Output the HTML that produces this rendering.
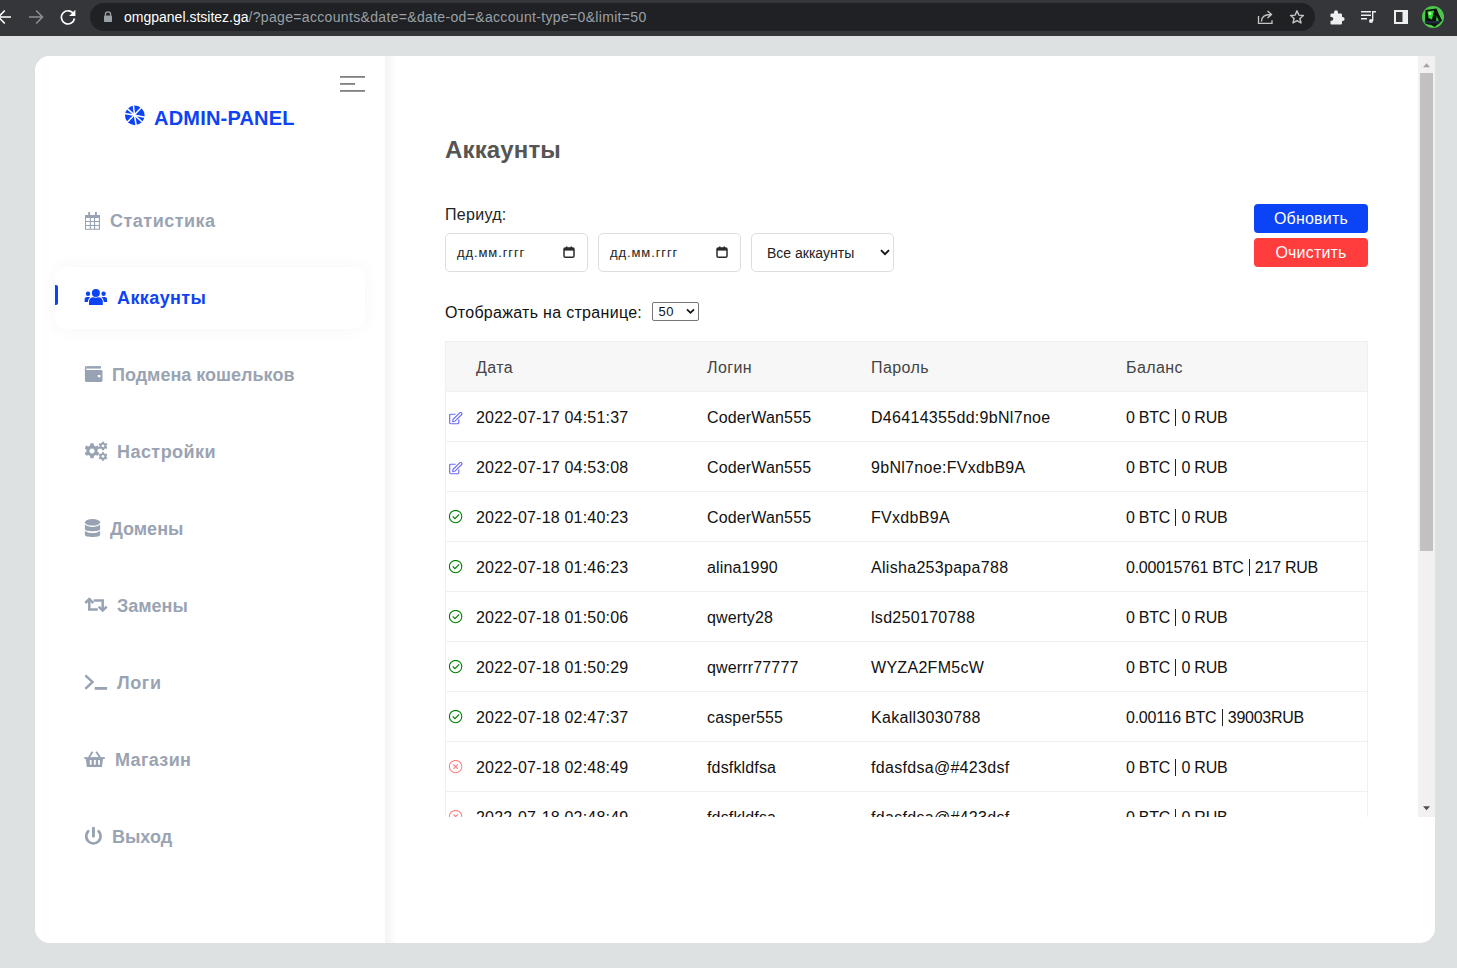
<!DOCTYPE html>
<html><head><meta charset="utf-8">
<style>
*{margin:0;padding:0;box-sizing:border-box}
html,body{width:1457px;height:968px;overflow:hidden;background:#dee1e2;font-family:"Liberation Sans",sans-serif}
#chrome{position:absolute;left:0;top:0;width:1457px;height:36px;background:#35363a}
#omni{position:absolute;left:90px;top:3px;width:1225px;height:28px;border-radius:14px;background:#202124}
#url{position:absolute;left:124px;top:9px;font-size:14px;color:#fff;white-space:nowrap;letter-spacing:0}
#url span{color:#9aa0a6;letter-spacing:.33px}
#card{position:absolute;left:35px;top:56px;width:1400px;height:887px;background:#fff;border-radius:15px;overflow:hidden}
#side{position:absolute;left:0;top:0;width:350px;height:887px;background:#fff}
#shadow{position:absolute;left:350px;top:0;width:12px;height:887px;background:linear-gradient(to right,#f3f4f6,#fff)}
.nav{position:absolute;left:49px;height:20px;font-size:18px;font-weight:bold;color:#9aa3b2;white-space:nowrap}
.nav svg{position:absolute;left:0;top:0}
.nav span{position:absolute;top:0;line-height:20px}
#active{position:absolute;left:20px;top:211px;width:310px;height:62px;border-radius:10px;background:#fff;box-shadow:0 0 16px rgba(80,100,140,.06)}
#bar{position:absolute;left:0;top:18px;width:3px;height:20px;background:#0d42f5;border-radius:0 2px 2px 0}

#main{position:absolute;left:385px;top:56px;width:1033px;height:761px;overflow:hidden}
#h1{position:absolute;left:60px;top:80px;font-size:24px;font-weight:bold;color:#555;line-height:28px;letter-spacing:.15px}
#period{position:absolute;left:60px;top:150px;font-size:16px;color:#212529;line-height:18px;letter-spacing:.3px}
.inp{position:absolute;top:177px;width:143px;height:39px;border:1px solid #dedede;border-radius:5px;background:#fff}
.inp span{position:absolute;left:11px;top:11px;font-size:13px;color:#222;line-height:16px;letter-spacing:.9px}
.inp span.sel{left:15px;letter-spacing:0;font-size:14px}
.cal{position:absolute;left:117px;top:12px}
.chev{position:absolute;left:128px;top:15px}
.btn{position:absolute;left:869px;width:114px;height:29px;border-radius:4px;color:#fff;font-size:16px;line-height:29px;text-align:center;letter-spacing:.2px}
#perpage{position:absolute;left:60px;top:248px;font-size:16px;color:#111;line-height:18px;letter-spacing:.3px}
#lim{position:absolute;left:267px;top:246px;width:47px;height:19px;border:1px solid #767676;border-radius:2px;background:#fff}
#lim span{position:absolute;left:5.5px;top:1px;letter-spacing:.4px;font-size:13px;line-height:15px;color:#111}
#lim svg{position:absolute;left:33px;top:5px}
#table{position:absolute;left:60px;top:285px;width:923px;height:560px;border-left:1px solid #eef0f6;border-right:1px solid #eef0f6}
.th,.tr{position:absolute;left:0;width:921px;height:50px;border-top:1px solid #eef0f6;font-size:16px;line-height:49px;white-space:nowrap}
.th{top:0;background:#f7f7f8;color:#444}
.tr{color:#111;background:#fff}
.th span,.tr span{position:absolute;top:1px}
.th span{letter-spacing:.4px}
.tr span.ic{top:0}
.c1{left:30px;letter-spacing:.2px}.c2{left:261px;letter-spacing:.15px}.c3{left:425px;letter-spacing:.3px}.c4{left:680px;letter-spacing:-.25px}
.ic{left:3px}
.ic svg{position:absolute;top:20px;left:0}
.pipe{display:inline-block;width:1px;height:17px;background:#222;vertical-align:-3px;margin:0 1px}
#logo{position:absolute;left:154px;top:106px;font-size:20px;font-weight:bold;color:#0d43f5;line-height:24px;letter-spacing:0.2px}
#sb{position:absolute;left:1418px;top:56px;width:17px;height:761px;background:#f1f1f1}
#thumb{position:absolute;left:2px;top:17px;width:13px;height:478px;background:#c1c1c1}
#up{position:absolute;left:5px;top:6.5px}
#dn{position:absolute;left:5px;top:750px}
</style></head><body>
<div id="chrome">
  <div id="omni"></div>
  <svg style="position:absolute;left:0;top:0" width="1457" height="35" viewBox="0 0 1457 35">
  <g fill="none" stroke="#fff" stroke-width="1.6">
    <path d="M-1 17h12M4.8 10.5l-6.3 6.5 6.3 6.5"/>
  </g>
  <g fill="none" stroke="#8e8e90" stroke-width="1.6">
    <path d="M29 17h13.5M36.2 10.5l6.3 6.5-6.3 6.5"/>
  </g>
  <g>
    <path d="M73.8 14.2a6.6 6.6 0 1 0 .7 4.3" fill="none" stroke="#fff" stroke-width="1.7"/>
    <path d="M75.4 9.8v6.3h-6.3z" fill="#fff"/>
  </g>
  <g fill="#9aa0a6">
    <rect x="104" y="15.5" width="8" height="6.5" rx="0.8"/>
    <path d="M105.4 15.7v-1.3a2.6 2.6 0 0 1 5.2 0v1.3" fill="none" stroke="#9aa0a6" stroke-width="1.3"/>
  </g>
  <!-- share -->
  <g fill="none" stroke="#c4c7c5" stroke-width="1.3">
    <path d="M1258.5 16v7.3h13.5v-3"/>
    <path d="M1261.5 21.5c0-5 3.5-7 9-7M1267.5 11l4 3.5-4 3.5"/>
  </g>
  <!-- star -->
  <path d="M1297 10.8l1.8 4.3 4.6.4-3.5 3 1.1 4.5-4-2.4-4 2.4 1.1-4.5-3.5-3 4.6-.4z" fill="none" stroke="#c4c7c5" stroke-width="1.4" stroke-linejoin="round"/>
  <!-- puzzle -->
  <path d="M1331 13.5h3v-1.2a2 2 0 0 1 4 0v1.2h3a1 1 0 0 1 1 1v2.5h.6a2 2 0 0 1 0 4h-.6v2.5a1 1 0 0 1-1 1h-9.5a1 1 0 0 1-1-1v-2.8h.9a1.9 1.9 0 0 0 0-3.8h-.9v-2.4a1 1 0 0 1 1-1z" fill="#eceef0"/>
  <!-- media -->
  <g fill="#eceef0">
    <rect x="1361" y="11" width="10" height="1.5"/><rect x="1361" y="14.5" width="10" height="1.5"/><rect x="1361" y="18" width="6" height="1.5"/>
    <circle cx="1371" cy="21" r="2"/><rect x="1372" y="11" width="1.4" height="10"/><rect x="1372" y="11" width="4" height="1.5"/>
  </g>
  <!-- side panel -->
  <path fill-rule="evenodd" d="M1394 10h14v14h-14z M1396 12h6.5v10h-6.5z" fill="#eceef0"/>
  <!-- avatar -->
  <circle cx="1433" cy="17" r="11" fill="#4cc94a"/>
  <path d="M1425.5 10l11-1.5 2.5 6 3 6-3 3-4.5 3.5-3-2-5.5-1-1-4z" fill="#0c120c"/>
  <path d="M1427.5 11.5l6.5-1-2 9-3.5-1.5z" fill="#2fdc35"/>
  <circle cx="1430" cy="13.5" r="1.4" fill="#b8f59a"/>
  <path d="M1436.5 16l2.5 4.5-3 1z" fill="#2fbf35"/>
  <path d="M1424.5 21h16l-1 2.5h-14.5z" fill="#252a48" opacity=".85"/>
</svg>

  <div id="url">omgpanel.stsitez.ga<span>/?page=accounts&amp;date=&amp;date-od=&amp;account-type=0&amp;limit=50</span></div>
</div>
<div id="card">
  <div id="side">
    <div id="active"><div id="bar"></div></div>
    <div class="nav" style="top:155px;color:#9aa3b2"><span style="left:26px;letter-spacing:0.5px">Статистика</span></div>
    <div class="nav" style="top:232px;color:#0d42f5"><span style="left:33px;letter-spacing:0.4px">Аккаунты</span></div>
    <div class="nav" style="top:309px"><span style="left:28px">Подмена кошельков</span></div>
    <div class="nav" style="top:386px"><span style="left:33px;letter-spacing:0.45px">Настройки</span></div>
    <div class="nav" style="top:463px"><span style="left:26px">Домены</span></div>
    <div class="nav" style="top:540px"><span style="left:33px">Замены</span></div>
    <div class="nav" style="top:617px"><span style="left:33px;letter-spacing:0.6px">Логи</span></div>
    <div class="nav" style="top:694px"><span style="left:31px;letter-spacing:0.35px">Магазин</span></div>
    <div class="nav" style="top:771px"><span style="left:28px">Выход</span></div>
  </div>
  <div id="shadow"></div>
</div>
<svg id="icons" style="position:absolute;left:0;top:0" width="400" height="968" viewBox="0 0 400 968">
  <g fill="#97a3b2">
    <!-- calendar -->
    <path fill-rule="evenodd" d="M85 215h15v14.8h-15z M86 217.9h3.8v3h-3.8z M90.9 217.9h3.1v3h-3.1z M95.1 217.9h3.8v3h-3.8z M86 222h3.8v2.9h-3.8z M90.9 222h3.1v2.9h-3.1z M95.1 222h3.8v2.9h-3.8z M86 226h3.8v2.8h-3.8z M90.9 226h3.1v2.8h-3.1z M95.1 226h3.8v2.8h-3.8z"/>
    <rect x="88.2" y="212" width="1.9" height="3.5"/><rect x="95" y="212" width="1.9" height="3.5"/>
    <!-- wallet -->
    <path d="M86.3 366.1h14.7v2.5h-14.7z"/>
    <path fill-rule="evenodd" d="M84.9 367.4a1.4 1.4 0 0 1 1.4-1.3v4h14.8a1.4 1.4 0 0 1 1.4 1.4v9a1.4 1.4 0 0 1-1.4 1.4h-14.8a1.4 1.4 0 0 1-1.4-1.4z M97.8 374.9h2.6v2.3h-2.6z"/>
    <!-- gears -->
    <g transform="translate(92,451)">
      <path fill-rule="evenodd" d="M-1.5-7.8h3l.5 2.3 1.6.9 2.2-.8 1.5 2.6-1.8 1.6v1.8l1.8 1.6-1.5 2.6-2.2-.8-1.6.9-.5 2.3h-3l-.5-2.3-1.6-.9-2.2.8-1.5-2.6 1.8-1.6v-1.8l-1.8-1.6 1.5-2.6 2.2.8 1.6-.9z M0-2.6a2.6 2.6 0 1 0 .01 0z"/>
    </g>
    <g transform="translate(103,445.8)">
      <path fill-rule="evenodd" d="M-1-4h2l.3 1.2.9.5 1.2-.4.9 1.5-.9.9v1l.9.9-.9 1.5-1.2-.4-.9.5-.3 1.2h-2l-.3-1.2-.9-.5-1.2.4-.9-1.5.9-.9v-1l-.9-.9.9-1.5 1.2.4.9-.5z M0-1.4a1.4 1.4 0 1 0 .01 0z"/>
    </g>
    <g transform="translate(103,456.3)">
      <path fill-rule="evenodd" d="M-1-4h2l.3 1.2.9.5 1.2-.4.9 1.5-.9.9v1l.9.9-.9 1.5-1.2-.4-.9.5-.3 1.2h-2l-.3-1.2-.9-.5-1.2.4-.9-1.5.9-.9v-1l-.9-.9.9-1.5 1.2.4.9-.5z M0-1.4a1.4 1.4 0 1 0 .01 0z"/>
    </g>
    <!-- database -->
    <ellipse cx="92.5" cy="522.3" rx="7.6" ry="3.3"/>
    <path d="M84.9 524.6c1.5 1.6 4.4 2.3 7.6 2.3s6.1-.7 7.6-2.3v4.5c0 1.6-3.4 2.2-7.6 2.2s-7.6-.6-7.6-2.2z"/>
    <path d="M84.9 530.8c1.5 1.6 4.4 2.3 7.6 2.3s6.1-.7 7.6-2.3v3.9c0 1.6-3.4 2.2-7.6 2.2s-7.6-.6-7.6-2.2z"/>
    <!-- basket -->
    <path d="M84.3 757.1h20.5v1.9h-20.5z"/>
    <path fill-rule="evenodd" d="M85.8 759h17.2l-1.1 7.9h-15z M89.8 759.9h1.8v4.9h-1.8z M93.9 759.9h1.9v4.9h-1.9z M98.1 759.9h1.8v4.9h-1.8z"/>
  </g>
  <g fill="none" stroke="#97a3b2">
    <!-- retweet -->
    <path d="M89.3 600v9.5h8.5" stroke-width="2.5"/>
    <path d="M85.3 603l4-4 4 4" stroke-width="2.5" stroke-linejoin="miter"/>
    <path d="M93.7 600.5h9v9.5" stroke-width="2.5"/>
    <path d="M98.7 606.6l4 4 4-4" stroke-width="2.5"/>
    <!-- terminal -->
    <path d="M85.3 675.3l7.3 6.7-7.3 6.8" stroke-width="2.4"/>
    <path d="M94.7 688.4h12.4" stroke-width="2.8"/>
    <!-- basket handles -->
    <path d="M92.5 751.8l-3.5 5.6M96.2 751.8l3.8 5.6" stroke-width="1.9"/>
    <!-- power -->
    <path d="M88.2 831.3a7.2 7.2 0 1 0 10.4 0" stroke-width="2.7" stroke-linecap="round"/>
    <path d="M93.45 828.2v8" stroke-width="2.9" stroke-linecap="round"/>
  </g>
  <!-- users (active) -->
  <g fill="#0d43f5">
    <circle cx="95.9" cy="293.1" r="4"/>
    <circle cx="88" cy="293.7" r="2.2"/><circle cx="103.6" cy="293.7" r="2.2"/>
    <path d="M89 305v-3.5a4.3 4.3 0 0 1 4.3-4.3c.8 0 1.6.5 2.6.5s1.8-.5 2.6-.5a4.3 4.3 0 0 1 4.3 4.3v3.5z"/>
    <path d="M84.6 301.9v-2.6a2.4 2.4 0 0 1 2.4-2.4h3.2c-1.3 1.2-2.1 3-2.3 5z"/>
    <path d="M107.1 301.9v-2.6a2.4 2.4 0 0 0-2.4-2.4h-3.2c1.3 1.2 2.1 3 2.3 5z"/>
  </g>
  <!-- logo -->
  <g>
    <circle cx="134.8" cy="115.4" r="9.8" fill="#0d43f5"/>
    <g stroke="#fff" stroke-width="1.5" fill="none">
      <path d="M133.4 105.3Q134.2 115.3 136.2 125.5"/>
      <path d="M124.6 113.6Q134.9 115.2 145 117.2"/>
      <path d="M127 108.4L143 122.8"/>
      <path d="M141.2 107.8L127.2 122.2"/>
    </g>
  </g>
  <!-- hamburger -->
  <g fill="#808080">
    <rect x="340" y="76" width="25" height="1.8"/>
    <rect x="340" y="83" width="15" height="1.8"/>
    <rect x="340" y="90" width="25" height="1.8"/>
  </g>
</svg>
<div id="logo">ADMIN-PANEL</div>

<div id="main">
  <div id="h1">Аккаунты</div>
  <div id="period">Периуд:</div>
  <div class="inp" style="left:60px"><span>дд.мм.гггг</span><svg class="cal" width="12" height="12" viewBox="0 0 12 12"><rect x="1" y="2" width="10" height="9.2" rx="1.3" fill="none" stroke="#2b2b2b" stroke-width="1.5"/><rect x="1" y="2" width="10" height="2.6" fill="#2b2b2b"/><rect x="3" y="0.5" width="1.5" height="2" fill="#2b2b2b"/><rect x="7.5" y="0.5" width="1.5" height="2" fill="#2b2b2b"/></svg></div>
  <div class="inp" style="left:213px"><span>дд.мм.гггг</span><svg class="cal" width="12" height="12" viewBox="0 0 12 12"><rect x="1" y="2" width="10" height="9.2" rx="1.3" fill="none" stroke="#2b2b2b" stroke-width="1.5"/><rect x="1" y="2" width="10" height="2.6" fill="#2b2b2b"/><rect x="3" y="0.5" width="1.5" height="2" fill="#2b2b2b"/><rect x="7.5" y="0.5" width="1.5" height="2" fill="#2b2b2b"/></svg></div>
  <div class="inp" style="left:366px"><span class="sel">Все аккаунты</span><svg class="chev" width="10" height="7" viewBox="0 0 10 7"><path d="M1 1.2l4 4 4-4" fill="none" stroke="#111" stroke-width="1.8"/></svg></div>
  <div class="btn" style="top:148px;background:#0b44f6">Обновить</div>
  <div class="btn" style="top:182px;background:#ff3d3d">Очистить</div>
  <div id="perpage">Отображать на странице:</div>
  <div id="lim"><span>50</span><svg width="10" height="7" viewBox="0 0 10 7"><path d="M1 1.4l3.5 3.5 3.5-3.5" fill="none" stroke="#111" stroke-width="1.7"/></svg></div>
  <div id="table">
    <div class="th"><span class="c1">Дата</span><span class="c2">Логин</span><span class="c3">Пароль</span><span class="c4">Баланс</span></div>
<div class="tr" style="top:50px"><span class="ic"><svg width="14" height="14" viewBox="0 0 14 14"><path d="M6.6 2.2H1.6a.9.9 0 0 0-.9.9v7.7a.9.9 0 0 0 .9.9h7.3a.9.9 0 0 0 .9-.9V7.6" fill="none" stroke="#6a6cf8" stroke-width="1.15"/><path d="M3.9 7.5L10.9 0.7A1.3 1.3 0 0 1 12.7 2.5L5.7 9.3L3.7 9.7Z" fill="none" stroke="#6a6cf8" stroke-width="1.1" stroke-linejoin="round"/></svg></span><span class="c1">2022-07-17 04:51:37</span><span class="c2">CoderWan555</span><span class="c3">D46414355dd:9bNl7noe</span><span class="c4">0 BTC <i class="pipe"></i> 0 RUB</span></div>
<div class="tr" style="top:100px"><span class="ic"><svg width="14" height="14" viewBox="0 0 14 14"><path d="M6.6 2.2H1.6a.9.9 0 0 0-.9.9v7.7a.9.9 0 0 0 .9.9h7.3a.9.9 0 0 0 .9-.9V7.6" fill="none" stroke="#6a6cf8" stroke-width="1.15"/><path d="M3.9 7.5L10.9 0.7A1.3 1.3 0 0 1 12.7 2.5L5.7 9.3L3.7 9.7Z" fill="none" stroke="#6a6cf8" stroke-width="1.1" stroke-linejoin="round"/></svg></span><span class="c1">2022-07-17 04:53:08</span><span class="c2">CoderWan555</span><span class="c3">9bNl7noe:FVxdbB9A</span><span class="c4">0 BTC <i class="pipe"></i> 0 RUB</span></div>
<div class="tr" style="top:150px"><span class="ic"><svg style="top:18px" width="14" height="14" viewBox="0 0 14 14"><circle cx="6.6" cy="6.6" r="6.2" fill="none" stroke="#008000" stroke-width="1.1"/><path d="M3.7 6.4L5.9 8.6L10.2 4.4" fill="none" stroke="#008000" stroke-width="1.25"/></svg></span><span class="c1">2022-07-18 01:40:23</span><span class="c2">CoderWan555</span><span class="c3">FVxdbB9A</span><span class="c4">0 BTC <i class="pipe"></i> 0 RUB</span></div>
<div class="tr" style="top:200px"><span class="ic"><svg style="top:18px" width="14" height="14" viewBox="0 0 14 14"><circle cx="6.6" cy="6.6" r="6.2" fill="none" stroke="#008000" stroke-width="1.1"/><path d="M3.7 6.4L5.9 8.6L10.2 4.4" fill="none" stroke="#008000" stroke-width="1.25"/></svg></span><span class="c1">2022-07-18 01:46:23</span><span class="c2">alina1990</span><span class="c3">Alisha253papa788</span><span class="c4">0.00015761 BTC <i class="pipe"></i> 217 RUB</span></div>
<div class="tr" style="top:250px"><span class="ic"><svg style="top:18px" width="14" height="14" viewBox="0 0 14 14"><circle cx="6.6" cy="6.6" r="6.2" fill="none" stroke="#008000" stroke-width="1.1"/><path d="M3.7 6.4L5.9 8.6L10.2 4.4" fill="none" stroke="#008000" stroke-width="1.25"/></svg></span><span class="c1">2022-07-18 01:50:06</span><span class="c2">qwerty28</span><span class="c3">lsd250170788</span><span class="c4">0 BTC <i class="pipe"></i> 0 RUB</span></div>
<div class="tr" style="top:300px"><span class="ic"><svg style="top:18px" width="14" height="14" viewBox="0 0 14 14"><circle cx="6.6" cy="6.6" r="6.2" fill="none" stroke="#008000" stroke-width="1.1"/><path d="M3.7 6.4L5.9 8.6L10.2 4.4" fill="none" stroke="#008000" stroke-width="1.25"/></svg></span><span class="c1">2022-07-18 01:50:29</span><span class="c2">qwerrr77777</span><span class="c3">WYZA2FM5cW</span><span class="c4">0 BTC <i class="pipe"></i> 0 RUB</span></div>
<div class="tr" style="top:350px"><span class="ic"><svg style="top:18px" width="14" height="14" viewBox="0 0 14 14"><circle cx="6.6" cy="6.6" r="6.2" fill="none" stroke="#008000" stroke-width="1.1"/><path d="M3.7 6.4L5.9 8.6L10.2 4.4" fill="none" stroke="#008000" stroke-width="1.25"/></svg></span><span class="c1">2022-07-18 02:47:37</span><span class="c2">casper555</span><span class="c3">Kakall3030788</span><span class="c4">0.00116 BTC <i class="pipe"></i> 39003RUB</span></div>
<div class="tr" style="top:400px"><span class="ic"><svg style="top:18px" width="14" height="14" viewBox="0 0 14 14"><circle cx="6.6" cy="6.6" r="6.2" fill="none" stroke="#ff8080" stroke-width="1.05"/><path d="M4.4 4.4l4.4 4.4M8.8 4.4l-4.4 4.4" stroke="#ff8080" stroke-width="1.2"/></svg></span><span class="c1">2022-07-18 02:48:49</span><span class="c2">fdsfkldfsa</span><span class="c3">fdasfdsa@#423dsf</span><span class="c4">0 BTC <i class="pipe"></i> 0 RUB</span></div>
<div class="tr" style="top:450px"><span class="ic"><svg style="top:18px" width="14" height="14" viewBox="0 0 14 14"><circle cx="6.6" cy="6.6" r="6.2" fill="none" stroke="#ff8080" stroke-width="1.05"/><path d="M4.4 4.4l4.4 4.4M8.8 4.4l-4.4 4.4" stroke="#ff8080" stroke-width="1.2"/></svg></span><span class="c1">2022-07-18 02:48:49</span><span class="c2">fdsfkldfsa</span><span class="c3">fdasfdsa@#423dsf</span><span class="c4">0 BTC <i class="pipe"></i> 0 RUB</span></div>
  </div>
</div>
<div id="sb"><div id="thumb"></div><svg id="up" width="8" height="5" viewBox="0 0 8 5"><path d="M0 4.2L3.5 0.2 7 4.2z" fill="#a3a3a3"/></svg><svg id="dn" width="8" height="5" viewBox="0 0 8 5"><path d="M0 0.2L3.5 4.2 7 0.2z" fill="#505050"/></svg></div>
</body></html>
